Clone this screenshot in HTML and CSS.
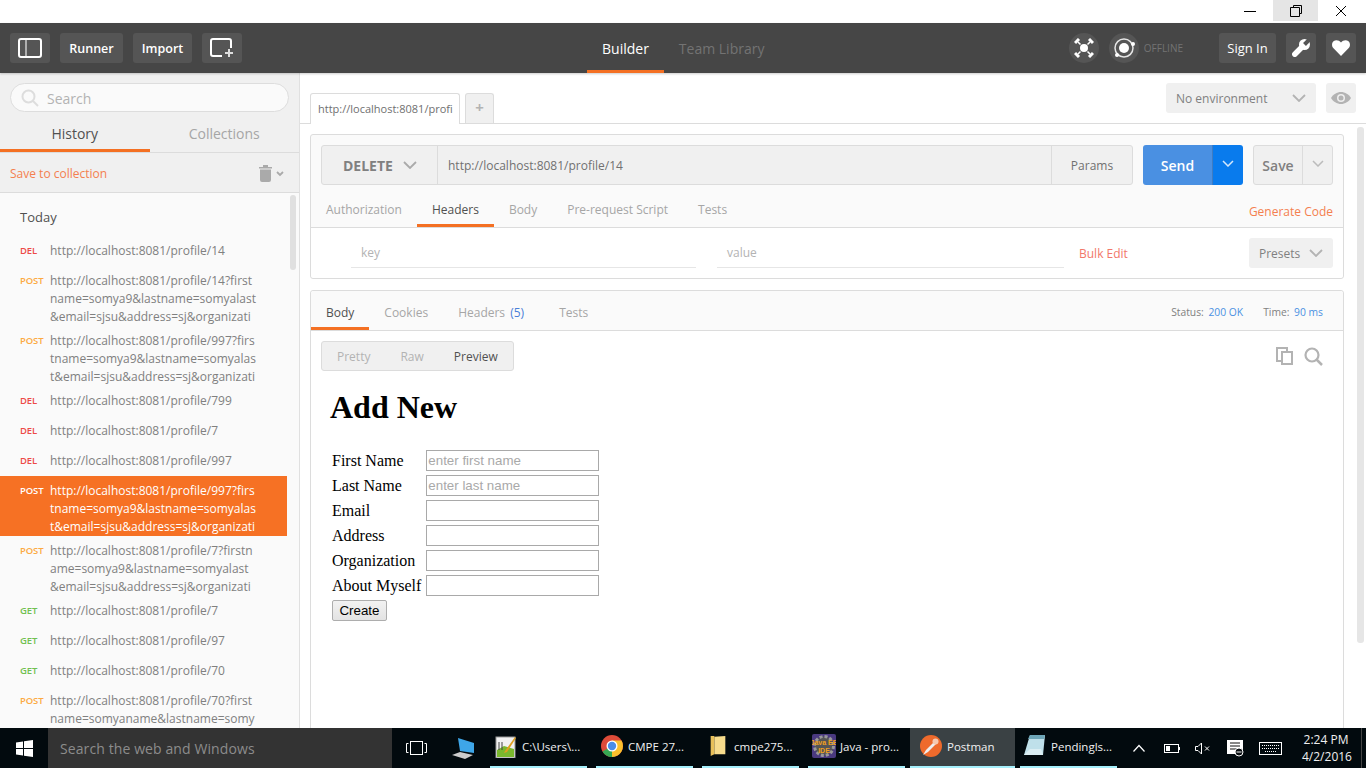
FILE: index.html
```html
<!DOCTYPE html>
<html lang="en">
<head>
<meta charset="utf-8">
<title>Postman</title>
<link rel="stylesheet" href="styles.css">
</head>
<body>
<div class="titlebar">
  <div class="winbtn"><svg width="12" height="12" viewBox="0 0 12 12"><path d="M0 6.500h12" stroke="#000" fill="none"/></svg></div>
  <div class="winbtn winbtn-active"><svg width="12" height="12" viewBox="0 0 12 12"><path d="M3.500 2.500V.5h8v8h-2M.5 2.500h9v9h-9z" stroke="#000" fill="none"/></svg></div>
  <div class="winbtn"><svg width="12" height="12" viewBox="0 0 12 12"><path d="M1 1l10 10M11 1L1 11" stroke="#000" fill="none"/></svg></div>
</div>

<header class="topbar">
  <div class="tb-left">
    <button class="tb-btn tb-icon"><svg width="24" height="20" viewBox="0 0 24 20"><rect x="1" y="1" width="22" height="18" rx="2" fill="none" stroke="#fff" stroke-width="2"/><path d="M8 2v16" stroke="#ccc" stroke-width="1.500"/></svg></button>
    <button class="tb-btn tb-runner">Runner</button>
    <button class="tb-btn tb-import">Import</button>
    <button class="tb-btn tb-icon"><svg width="24" height="20" viewBox="0 0 24 20"><path d="M12 18H3a2 2 0 0 1-2-2V3a2 2 0 0 1 2-2h16a2 2 0 0 1 2 2v7" fill="none" stroke="#fff" stroke-width="2"/><path d="M19 11v8M15 15h8" stroke="#ddd" stroke-width="2"/></svg></button>
  </div>
  <nav class="tb-tabs">
    <div class="tb-tab tb-tab-on">Builder</div>
    <div class="tb-tab">Team Library</div>
  </nav>
  <div class="tb-right">
    <div class="tb-circle"><svg width="20" height="20" viewBox="0 0 20 20"><path d="M4 4l12 12M16 4L4 16" stroke="#fff" stroke-width="1.500"/><path d="M1 5l4-4M15 1l4 4M1 15l4 4M15 19l4-4" stroke="#fff" stroke-width="3"/><circle cx="10" cy="10" r="5" fill="#555"/><circle cx="10" cy="10" r="4" fill="#fff"/></svg></div>
    <div class="tb-circle tb-circle-2"><svg width="24" height="24" viewBox="0 0 24 24"><circle cx="12" cy="12" r="9" fill="none" stroke="#e6e6e6" stroke-width="1.500"/><circle cx="12" cy="12" r="5" fill="#fff"/><circle cx="21" cy="8" r="2" fill="#fff"/><circle cx="5" cy="19" r="2" fill="#fff"/></svg></div>
    <span class="offline">OFFLINE</span>
    <button class="tb-btn tb-signin">Sign In</button>
    <button class="tb-btn tb-square"><svg width="18" height="18" viewBox="0 0 18 18"><path d="M2.800 15.200L10 8" stroke="#fff" stroke-width="5.500" stroke-linecap="round"/><circle cx="12.500" cy="5.500" r="5.500" fill="#fff"/><path d="M12.500 5.500L18 0" stroke="#555" stroke-width="4"/></svg></button>
    <button class="tb-btn tb-square"><svg width="18" height="16" viewBox="0 0 18 16"><path d="M9 16L1.500 8.300C-.5 6.200-.4 3 1.500 1.300 3.500-.4 6.800-.3 9 2.500 11.200-.3 14.500-.4 16.500 1.300 18.400 3 18.500 6.200 16.500 8.300z" fill="#fff"/></svg></button>
  </div>
</header>

<div class="workspace">
  <aside class="sidebar">
    <div class="side-top">
      <div class="search">
        <svg width="18" height="18" viewBox="0 0 18 18"><circle cx="7.500" cy="7.500" r="6" fill="none" stroke="#ddd" stroke-width="2"/><path d="M12 12l5 5" stroke="#ddd" stroke-width="2"/></svg>
        <span>Search</span>
      </div>
      <div class="side-tabs">
        <div class="side-tab side-tab-on">History</div>
        <div class="side-tab">Collections</div>
      </div>
      <div class="side-actions">
        <span class="save-link">Save to collection</span>
        <svg class="trash" width="26" height="18" viewBox="0 0 26 18"><path d="M1 3h13v1.500H1zM5 1h5v2H5zM2 5.500h11V16a2 2 0 0 1-2 2H4a2 2 0 0 1-2-2z" fill="#aaa"/><path d="M19 8l3 3 3-3" fill="none" stroke="#aaa" stroke-width="1.800"/></svg>
      </div>
    </div>
    <div class="history">
      <div class="today">Today</div>
      <div class="item"><span class="m del">DEL</span><span class="url">http://localhost:8081/profile/14</span></div>
      <div class="item multi"><span class="m post">POST</span><span class="url">http://localhost:8081/profile/14?first<br>name=somya9&amp;lastname=somyalast<br>&amp;email=sjsu&amp;address=sj&amp;organizati</span></div>
      <div class="item multi"><span class="m post">POST</span><span class="url">http://localhost:8081/profile/997?firs<br>tname=somya9&amp;lastname=somyalas<br>t&amp;email=sjsu&amp;address=sj&amp;organizati</span></div>
      <div class="item"><span class="m del">DEL</span><span class="url">http://localhost:8081/profile/799</span></div>
      <div class="item"><span class="m del">DEL</span><span class="url">http://localhost:8081/profile/7</span></div>
      <div class="item"><span class="m del">DEL</span><span class="url">http://localhost:8081/profile/997</span></div>
      <div class="item multi item-on"><span class="m post">POST</span><span class="url">http://localhost:8081/profile/997?firs<br>tname=somya9&amp;lastname=somyalas<br>t&amp;email=sjsu&amp;address=sj&amp;organizati</span></div>
      <div class="item multi"><span class="m post">POST</span><span class="url">http://localhost:8081/profile/7?firstn<br>ame=somya9&amp;lastname=somyalast<br>&amp;email=sjsu&amp;address=sj&amp;organizati</span></div>
      <div class="item"><span class="m get">GET</span><span class="url">http://localhost:8081/profile/7</span></div>
      <div class="item"><span class="m get">GET</span><span class="url">http://localhost:8081/profile/97</span></div>
      <div class="item"><span class="m get">GET</span><span class="url">http://localhost:8081/profile/70</span></div>
      <div class="item multi"><span class="m post">POST</span><span class="url">http://localhost:8081/profile/70?first<br>name=somyaname&amp;lastname=somy</span></div>
      <div class="side-scroll"></div>
    </div>
  </aside>

  <main class="main">
    <div class="main-scroll"></div>
    <div class="tabrow">
      <div class="req-tab">http://localhost:8081/profi</div>
      <div class="add-tab">+</div>
      <div class="env">
        <div class="env-select"><span>No environment</span><svg width="14" height="8" viewBox="0 0 14 8"><path d="M1 1l6 6 6-6" fill="none" stroke="#b3b3b3" stroke-width="1.800"/></svg></div>
        <div class="env-eye"><svg width="20" height="12" viewBox="0 0 20 12"><path d="M0 6c2-3.500 6-6 10-6s8 2.500 10 6c-2 3.500-6 6-10 6S2 9.500 0 6z" fill="#b3b3b3"/><circle cx="10" cy="6" r="4" fill="#eee"/><circle cx="10" cy="6" r="2.500" fill="#b3b3b3"/></svg></div>
      </div>
    </div>

    <section class="card req-card">
      <div class="urlrow">
        <div class="urlgroup">
          <div class="method"><span>DELETE</span><svg width="14" height="8" viewBox="0 0 14 8"><path d="M1 1l6 6 6-6" fill="none" stroke="#aaa" stroke-width="1.800"/></svg></div>
          <div class="urlfield">http://localhost:8081/profile/14</div>
          <div class="params">Params</div>
        </div>
        <div class="send"><span class="send-label">Send</span><span class="send-drop"><svg width="12" height="7" viewBox="0 0 12 7"><path d="M1 1l5 5 5-5" fill="none" stroke="#d5e8fb" stroke-width="1.500"/></svg></span></div>
        <div class="save"><span class="save-label">Save</span><span class="save-drop"><svg width="12" height="7" viewBox="0 0 12 7"><path d="M1 1l5 5 5-5" fill="none" stroke="#bbb" stroke-width="1.500"/></svg></span></div>
      </div>
      <div class="tabs req-tabs">
        <div class="tab">Authorization</div>
        <div class="tab tab-on">Headers</div>
        <div class="tab">Body</div>
        <div class="tab">Pre-request Script</div>
        <div class="tab">Tests</div>
        <div class="gen">Generate Code</div>
      </div>
      <div class="kv">
        <div class="kv-key">key</div>
        <div class="kv-val">value</div>
        <div class="bulk">Bulk Edit</div>
        <div class="presets"><span>Presets</span><svg width="14" height="8" viewBox="0 0 14 8"><path d="M1 1l6 6 6-6" fill="none" stroke="#b3b3b3" stroke-width="1.800"/></svg></div>
      </div>
    </section>

    <section class="card res-card">
      <div class="tabs res-tabs">
        <div class="tab tab-on">Body</div>
        <div class="tab">Cookies</div>
        <div class="tab tab-count">Headers <span class="count">(5)</span></div>
        <div class="tab">Tests</div>
        <div class="status"><span>Status:</span> <b>200 OK</b><span class="time">Time:</span> <b>90 ms</b></div>
      </div>
      <div class="viewrow">
        <div class="viewgroup"><span>Pretty</span><span>Raw</span><span class="view-on">Preview</span></div>
        <div class="viewicons">
          <svg width="18" height="18" viewBox="0 0 18 18"><path d="M5 14H1V1h10v3" fill="none" stroke="#b3b3b3" stroke-width="2"/><path d="M6 5h10v12H6z" fill="none" stroke="#b3b3b3" stroke-width="2"/></svg>
          <svg width="19" height="19" viewBox="0 0 19 19"><circle cx="8" cy="8" r="6.500" fill="none" stroke="#b3b3b3" stroke-width="2.200"/><path d="M12.500 12.500L18 18" stroke="#b3b3b3" stroke-width="2.500"/></svg>
        </div>
      </div>
      <div class="preview">
        <h1>Add New</h1>
        <table class="form">
          <tr><td>First Name</td><td><input type="text" placeholder="enter first name"></td></tr>
          <tr><td>Last Name</td><td><input type="text" placeholder="enter last name"></td></tr>
          <tr><td>Email</td><td><input type="text"></td></tr>
          <tr><td>Address</td><td><input type="text"></td></tr>
          <tr><td>Organization</td><td><input type="text"></td></tr>
          <tr><td>About Myself</td><td><input type="text"></td></tr>
          <tr><td><button class="create">Create</button></td><td></td></tr>
        </table>
      </div>
    </section>
  </main>
</div>

<footer class="taskbar">
  <div class="start"><svg width="17" height="17" viewBox="0 0 17 17"><path d="M0 2.500l7-1v6.500H0zM8 1.300L17 0v8H8zM0 9h7v6.500l-7-1zM8 9h9v8l-9-1.300z" fill="#fff"/></svg></div>
  <div class="ts-search">Search the web and Windows</div>
  <div class="ts-view"><svg width="21" height="14" viewBox="0 0 21 14"><rect x="4.500" y=".5" width="12" height="13" fill="none" stroke="#fff"/><path d="M2.500 2.500H.5v9h2M18.500 2.500h2v9h-2" fill="none" stroke="#fff"/></svg></div>
  <div class="ts-laptop"><svg width="24" height="22" viewBox="0 0 24 22"><path d="M6 1l16 5v10l-14-2z" fill="#3ea6e8"/><path d="M0 18l8-3 13 3-8 4z" fill="#ccc"/></svg></div>
  <div class="apps">
    <div class="app"><svg width="20" height="24" viewBox="0 0 20 24"><rect x="0" y="3" width="19" height="21" fill="#f2f2f2" stroke="#999"/><path d="M1 16l7-4 10 3v8H1z" fill="#7ab82e"/><path d="M3 8v8M6 8v8" stroke="#444"/><path d="M9 17L19 3l1 1L11 18l-3 1z" fill="#e0a020"/></svg><span>C:\Users\...</span></div>
    <div class="app"><svg width="22" height="22" viewBox="0 0 22 22"><circle cx="11" cy="11" r="11" fill="#dd4b39"/><path d="M11 11L1.500 16.500A11 11 0 0 0 11 22c1 0 2 0 3-.5z" fill="#36a853"/><path d="M11 5.500h9.500A11 11 0 0 1 11 22z" fill="#fbc02d"/><circle cx="11" cy="11" r="5.500" fill="#fff"/><circle cx="11" cy="11" r="4.200" fill="#4a8de8"/></svg><span>CMPE 27...</span></div>
    <div class="app"><svg width="14" height="22" viewBox="0 0 16 24"><path d="M0 1h4v20l-4 2z" fill="#e8c05a"/><path d="M4 2l12-1v20H4z" fill="#f7dc8c"/></svg><span>cmpe275...</span></div>
    <div class="app"><svg width="24" height="24" viewBox="0 0 24 24"><rect width="24" height="24" rx="2" fill="#4a3a80"/><circle cx="12" cy="12" r="9.500" fill="#555" stroke="#999" stroke-width="3" stroke-dasharray="3 2"/><text x="12" y="11" text-anchor="middle" class="ee">Java EE</text><text x="12" y="19" text-anchor="middle" class="ee">IDE</text></svg><span>Java - pro...</span></div>
    <div class="app app-on"><svg width="22" height="22" viewBox="0 0 22 22"><circle cx="11" cy="11" r="11" fill="#ee6a2c"/><path d="M3 20l3-5 8-8 2 2-8 8z" fill="#eee"/><circle cx="15.500" cy="6.500" r="3" fill="#f6c9b0"/></svg><span>Postman</span></div>
    <div class="app app-last"><svg width="24" height="24" viewBox="0 0 24 24"><path d="M7 1h15l-2 20H1z" fill="#bfe0ea"/><path d="M7 1h15l-1 4H5z" fill="#6ea6b8"/><path d="M1 21l6-6h11l2 6z" fill="#dbeef3"/></svg><span>Pendingls...</span></div>
  </div>
  <div class="tray">
    <svg class="t-chev" width="12" height="8" viewBox="0 0 12 8"><path d="M.5 7.500L6 1.500l5.500 6" fill="none" stroke="#fff" stroke-width="1.200"/></svg>
    <svg class="t-batt" width="16" height="9" viewBox="0 0 16 9"><rect x=".5" y=".5" width="14" height="8" fill="none" stroke="#fff"/><rect x="2" y="2" width="4" height="5" fill="#fff"/><rect x="15" y="3" width="1" height="3" fill="#fff"/></svg>
    <svg class="t-vol" width="15" height="13" viewBox="0 0 15 13"><path d="M.5 4.500H3L6.500 1v11L3 8.500H.5z" fill="none" stroke="#fff"/><path d="M10 4.500l4 4M14 4.500l-4 4" stroke="#fff"/></svg>
    <svg class="t-note" width="17" height="18" viewBox="0 0 17 18"><path d="M0 1h16v12h-5l-1 2H0z" fill="#fff"/><path d="M3 4h10M3 7h10M3 10h7" stroke="#111"/><circle cx="12" cy="13" r="4" fill="#0a0f12" stroke="#fff"/><path d="M9.500 13h5" stroke="#fff"/></svg>
    <svg class="t-key" width="23" height="13" viewBox="0 0 23 13"><rect x=".5" y=".5" width="22" height="12" fill="none" stroke="#fff"/><path d="M3 3.500h17M3 6.500h17M6 9.500h11" stroke="#fff" stroke-dasharray="1 1"/></svg>
    <div class="clock"><div>2:24 PM</div><div>4/2/2016</div></div>
    <div class="t-sep"></div>
  </div>
</footer>
</body>
</html>
```

FILE: styles.css
```css
* { box-sizing: border-box; }
html, body { margin: 0; height: 100%; }
body {
  width: 1366px; height: 768px; overflow: hidden;
  display: flex; flex-direction: column;
  font-family: "Open Sans", sans-serif; font-size: 13px; color: #808080; background: #fff;
}
button { font-family: inherit; border: 0; padding: 0; }

/* title bar */
.titlebar { height: 23px; display: flex; justify-content: flex-end; flex: none; padding-right: 2px; background: #fff; align-items: flex-start; }
.winbtn { width: 46px; height: 21px; display: flex; align-items: center; justify-content: center; }
.winbtn-active { width: 45px; background: #e5e5e5; }

/* header */
.topbar { height: 50px; flex: none; background: #464646; display: flex; align-items: center; padding: 0 10px; box-shadow: 0 1px 2px rgba(0,0,0,.2); position: relative; z-index: 2; }
.tb-left { display: flex; gap: 10px; }
.tb-btn { height: 30px; background: #555; border-radius: 3px; color: #fff; display: flex; align-items: center; justify-content: center; font-size: 13px; }
.tb-icon { width: 40px; }
.tb-runner { width: 63px; font-weight: 600; font-size: 12.500px; }
.tb-import { width: 59px; font-weight: 600; font-size: 12.500px; }
.tb-tabs { display: flex; margin-left: 345px; align-self: stretch; }
.tb-tab { font-size: 14px; color: #737373; padding: 0 15px; display: flex; align-items: center; border-bottom: 3px solid transparent; padding-top: 3px; }
.tb-tab-on { color: #fff; border-bottom-color: #f47023; }
.tb-right { margin-left: auto; display: flex; align-items: center; }
.tb-circle { width: 30px; height: 30px; border-radius: 50%; background: #555; display: flex; align-items: center; justify-content: center; }
.tb-circle-2 { margin-left: 10px; }
.offline { font-size: 10px; color: #737373; margin: 0 36px 0 5px; }
.tb-signin { width: 57px; }
.tb-square { width: 30px; margin-left: 10px; }

/* workspace */
.workspace { flex: 1; min-height: 0; display: flex; }

/* sidebar */
.sidebar { width: 300px; flex: none; display: flex; flex-direction: column; background: #f0f0f0; border-right: 1px solid #e0e0e0; }
.side-top { flex: none; padding-top: 10px; }
.search { margin: 0 10px; width: 279px; height: 29px; border: 1px solid #ddd; border-radius: 15px; background: #fafafa; display: flex; align-items: center; padding-left: 10px; gap: 8px; font-size: 14px; color: #b3b3b3; }
.search span { padding-top: 2px; }
.side-tabs { display: flex; height: 41px; border-bottom: 1px solid #dcdcdc; }
.side-tab { width: 150px; text-align: center; font-size: 14px; color: #a6a6a6; padding-top: 12px; }
.side-tab-on { color: #505050; border-bottom: 3px solid #f47023; height: 40px; }
.side-actions { height: 40px; display: flex; align-items: center; justify-content: space-between; padding: 0 15px 0 10px; border-bottom: 1px solid #dcdcdc; }
.save-link { font-size: 12px; color: #f47f4f; padding-top: 1px; }
.history { flex: 1; min-height: 0; overflow: hidden; background: #fafafa; position: relative; padding-top: 14px; }
.today { font-size: 13px; color: #505050; padding-left: 20px; height: 29px; line-height: 20px; }
.item { display: flex; min-height: 30px; padding-top: 6px; padding-left: 20px; width: 287px; font-size: 12px; line-height: 18px; color: #808080; }
.m { width: 30px; flex: none; font-size: 9.500px; font-weight: 600; letter-spacing: -.1px; }
.url { white-space: nowrap; }
.del { color: #ed4b48; }
.post { color: #fcaa42; }
.get { color: #70c050; }
.item-on { background: #f67124; color: #fff; }
.item-on .m { color: #fff; }
.side-scroll { position: absolute; left: 290px; top: 2px; width: 6px; height: 75px; border-radius: 3px; background: #e0e0e0; }

/* main */
.main { flex: 1; min-width: 0; overflow: hidden; position: relative; background: #fff; }
.main-scroll { position: absolute; left: 1057px; top: 54px; width: 7px; height: 516px; border-radius: 3px; background: #e6e6e6; }
.tabrow { height: 51px; border-bottom: 1px solid #dcdcdc; display: flex; align-items: flex-end; padding-left: 10px; position: relative; }
.req-tab { width: 150px; height: 31px; border: 1px solid #dcdcdc; border-bottom: 0; border-radius: 3px 3px 0 0; background: #fff; font-size: 11px; color: #707070; padding: 7px 0 0 7px; white-space: nowrap; overflow: hidden; position: relative; top: 1px; }
.add-tab { width: 29px; height: 30px; margin-left: 5px; border: 1px solid #dcdcdc; border-bottom: 0; border-radius: 3px 3px 0 0; background: #f0f0f0; color: #b3b3b3; font-size: 15px; font-weight: 700; text-align: center; line-height: 26px; }
.env { margin-left: auto; display: flex; align-self: flex-start; margin-top: 10px; padding-right: 10px; gap: 10px; }
.env-select { width: 150px; height: 30px; background: #f0f0f0; border-radius: 3px; display: flex; align-items: center; justify-content: space-between; padding: 0 10px; font-size: 12px; color: #808080; }
.env-eye { width: 30px; height: 30px; background: #f0f0f0; border-radius: 3px; display: flex; align-items: center; justify-content: center; }

.card { width: 1034px; margin-left: 10px; border: 1px solid #dcdcdc; border-radius: 3px; background: #fafafa; }
.req-card { margin-top: 10px; height: 145px; }
.res-card { margin-top: 11px; height: 500px; background: #fff; }
.urlrow { display: flex; padding: 10px 10px 0; height: 50px; }
.urlgroup { width: 812px; height: 40px; display: flex; border: 1px solid #dcdcdc; border-radius: 3px; background: #f0f0f0; }
.method { width: 116px; flex: none; display: flex; align-items: center; padding-left: 21px; gap: 10px; font-size: 14px; font-weight: 700; color: #808080; border-right: 1px solid #dcdcdc; }
.urlfield { flex: 1; display: flex; align-items: center; padding-left: 10px; font-size: 12px; color: #707070; }
.params { width: 81px; flex: none; border-left: 1px solid #dcdcdc; display: flex; align-items: center; justify-content: center; font-size: 12px; color: #707070; }
.send { width: 100px; height: 40px; margin-left: 10px; display: flex; border-radius: 3px; overflow: hidden; color: #fff; font-size: 14px; font-weight: 600; }
.send-label { width: 70px; background: #4a90e2; display: flex; align-items: center; justify-content: center; border-right: 1px solid #3f7cc2; }
.send-drop { width: 30px; background: #097bed; display: flex; align-items: center; justify-content: center; padding-bottom: 3px; }
.save { width: 80px; height: 40px; margin-left: 10px; display: flex; border: 1px solid #dcdcdc; border-radius: 3px; background: #f0f0f0; color: #808080; font-size: 14px; font-weight: 600; }
.save-label { width: 49px; display: flex; align-items: center; justify-content: center; border-right: 1px solid #dcdcdc; }
.save-drop { flex: 1; display: flex; align-items: center; justify-content: center; padding-bottom: 3px; }
.tabs { display: flex; font-size: 12px; color: #a6a6a6; }
.tab { padding: 0 15px; height: 32px; border-bottom: 3px solid transparent; line-height: 29px; white-space: nowrap; }
.tab-on { color: #505050; border-bottom-color: #f47023; }
.req-tabs { margin-top: 10px; height: 33px; border-bottom: 1px solid #dcdcdc; padding-right: 10px; }
.gen { margin-left: auto; color: #f47f4f; line-height: 33px; }
.kv { height: 50px; background: #fff; display: flex; align-items: flex-start; font-size: 12px; padding-left: 40px; border-radius: 0 0 3px 3px; }
.kv-key, .kv-val { height: 29px; width: 345px; border-bottom: 1px solid #e6e6e6; color: #b3b3b3; padding: 5px 0 0 10px; margin-top: 11px; }
.kv-val { width: 347px; margin-left: 21px; }
.bulk { color: #f2786a; margin: 17px 0 0 15px; }
.presets { margin: 10px 10px 0 auto; width: 84px; height: 30px; background: #f0f0f0; border-radius: 3px; display: flex; align-items: center; justify-content: space-between; padding: 0 10px; color: #808080; }
.res-tabs { height: 40px; background: #fafafa; border-bottom: 1px solid #dcdcdc; border-radius: 3px 3px 0 0; }
.res-tabs .tab { line-height: 44px; height: 39px; }
.res-tabs .tab-count { padding-right: 20px; }
.count { color: #4a7fd8; margin-left: 2px; }
.status { margin-left: auto; padding-right: 20px; font-size: 10.300px; line-height: 42px; color: #808080; }
.status b { font-weight: 400; color: #4a90e2; margin-left: 2px; }
.time { margin-left: 20px; }
.viewrow { display: flex; justify-content: space-between; padding: 10px 20px 0 10px; }
.viewgroup { width: 193px; height: 30px; background: #f0f0f0; border: 1px solid #dcdcdc; border-radius: 3px; display: flex; align-items: center; font-size: 12px; color: #b3b3b3; padding-left: 15px; gap: 30px; }
.view-on { color: #505050; }
.viewicons { display: flex; gap: 10px; align-items: center; }
.preview { padding-left: 19px; font-family: "Liberation Serif", serif; color: #000; font-size: 16px; }
.preview h1 { font-size: 32px; margin: 18px 0 21px; line-height: 37px; font-weight: 700; }
.form { border-spacing: 2px; border-collapse: separate; }
.form td { padding: 1px; }
.form td:first-child { padding: 1px 2px 1px 0; }
.form input { display: block; width: 173px; height: 21px; border: 1px solid #a9a9a9; padding: 1px; font-family: "Liberation Sans", sans-serif; font-size: 13.333px; background: #fff; }
.form input::placeholder { color: #a9a9a9; }
.create { display: block; width: 55px; height: 21px; border: 1px solid #adadad; border-radius: 2px; background: linear-gradient(#f2f2f2, #e3e3e3); font-family: "Liberation Sans", sans-serif; font-size: 13.333px; color: #000; }

/* taskbar */
.taskbar { height: 40px; flex: none; background: #020a0e; display: flex; color: #fff; font-size: 12px; }
.start { width: 48px; display: flex; align-items: center; justify-content: center; }
.ts-search { width: 344px; background: #333; color: #8c8c8c; font-size: 14px; letter-spacing: .1px; display: flex; align-items: center; padding-left: 12px; }
.ts-view { width: 50px; display: flex; align-items: center; padding-left: 14px; }
.ts-laptop { width: 48px; display: flex; align-items: center; padding-left: 10px; }
.apps { display: flex; gap: 9px; }
.app { width: 97px; display: flex; align-items: center; gap: 4px; padding-left: 4px; padding-bottom: 2px; border-bottom: 2px solid #a5effb; white-space: nowrap; font-size: 11.500px; color: #f0f0f0; }
.app svg { flex: none; width: 24px; }
.app-on { width: 105px; margin-left: -4px; padding-left: 9px; background: #3a4144; }
.app-last { margin-left: -4px; padding-left: 3px; }
.ee { font-size: 7px; fill: #f0a020; font-family: "Liberation Sans", sans-serif; font-weight: 700; }
.tray { margin-left: auto; display: flex; align-items: center; padding-right: 4px; }
.t-chev { margin-right: 19px; }
.t-batt { margin-right: 15px; }
.t-vol { margin-right: 17px; }
.t-note { margin-right: 15px; }
.t-key { margin-right: 20px; }
.clock { text-align: center; font-size: 12px; line-height: 17px; width: 48px; color: #f0f0f0; white-space: nowrap; }
.t-sep { width: 1px; height: 40px; margin-left: 11px; background: #444; }
```
